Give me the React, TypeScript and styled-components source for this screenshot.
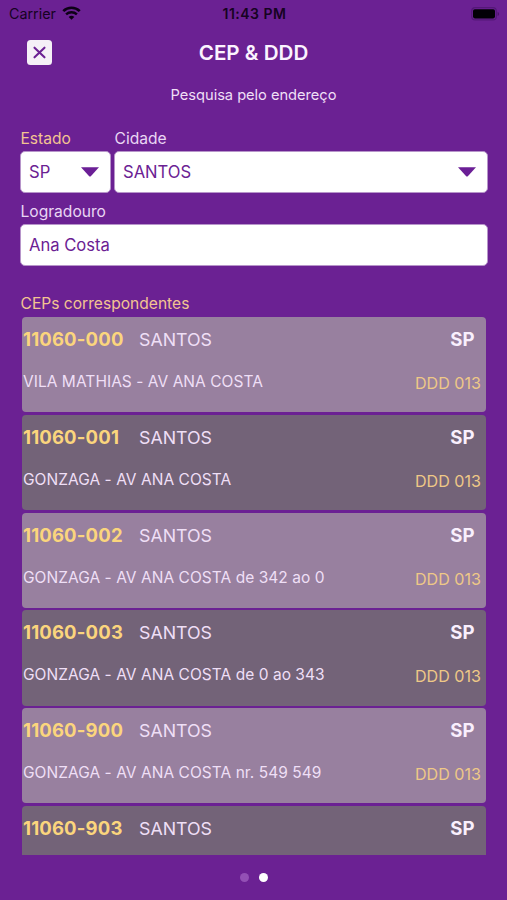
import React from "react";
import styled, { createGlobalStyle } from "styled-components";

const PURPLE = "#6b2193";

const GlobalStyle = createGlobalStyle`
  * { box-sizing: border-box; }
  body {
    margin: 0;
    background: ${PURPLE};
    font-family: "Inter", sans-serif;
  }
`;

const Screen = styled.main`
  display: flex;
  flex-direction: column;
  width: 507px;
  height: 900px;
  overflow: hidden;
  background: ${PURPLE};
  color: #efdff6;
`;

const StatusBar = styled.header`
  display: grid;
  grid-template-columns: 1fr auto 1fr;
  align-items: center;
  height: 28px;
  padding: 0 7px 0 9px;
  color: #160322;
`;

const Carrier = styled.div`
  display: flex;
  align-items: center;
  gap: 6px;
  font-size: 14.3px;
  line-height: 28px;

  svg { margin-top: -3px; }
`;

const Clock = styled.time`
  font-size: 14px;
  font-weight: 600;
  letter-spacing: 0.5px;
  line-height: 28px;
`;

const BatterySlot = styled.div`
  display: flex;
  justify-content: flex-end;
  margin-top: -1px;
`;

const TitleBar = styled.div`
  display: grid;
  grid-template-columns: 100px 1fr 100px;
  align-items: center;
  height: 48px;
`;

const CloseButton = styled.button`
  display: grid;
  place-items: center;
  width: 25px;
  height: 25px;
  margin: 0 0 2px 27px;
  padding: 0;
  border: 0;
  border-radius: 3.5px;
  background: #f5f0f7;
`;

const Title = styled.h1`
  margin: 0;
  text-align: center;
  color: #fbf3ff;
  font-size: 20.6px;
  font-weight: 580;
  line-height: 50px;
`;

const Subtitle = styled.p`
  height: 36px;
  margin: 0;
  text-align: center;
  font-size: 14.7px;
  letter-spacing: -0.05px;
  line-height: 38px;
`;

const Form = styled.form`
  display: grid;
  grid-template-columns: 91px 1fr;
  column-gap: 3px;
  row-gap: 7px;
  padding: 15px 19px 0 20px;
`;

const Field = styled.label<{ $wide?: boolean }>`
  display: flex;
  flex-direction: column;
  grid-column: ${(p) => (p.$wide ? "1 / -1" : "auto")};
`;

const Caption = styled.span<{ $accent?: boolean }>`
  height: 24px;
  padding-left: 0.5px;
  color: ${(p) => (p.$accent ? "#f3c491" : "#e9d6f3")};
  font-size: 15.6px;
  line-height: 23px;
`;

const Control = styled.span`
  display: flex;
  align-items: center;
  justify-content: space-between;
  height: 42px;
  padding: 0 11px 0 8px;
  border: 1px solid #b795ca;
  border-radius: 5px;
  background: #fff;
  color: #6b2193;
  font-size: 16.6px;
  line-height: 40px;
`;

const ResultsHeading = styled.h2`
  height: 29.5px;
  margin: 21.5px 0 0;
  padding-left: 20.5px;
  color: #f3c491;
  font-size: 15.6px;
  font-weight: 400;
  line-height: 32px;
`;

const Results = styled.ul`
  display: flex;
  flex-direction: column;
  gap: 2.5px;
  height: 538px;
  margin: 0 21px 0 21.5px;
  padding: 0;
  overflow: hidden;
  list-style: none;
`;

const Card = styled.li<{ $dark: boolean }>`
  flex: 0 0 95.25px;
  height: 95.25px;
  padding: 0 5px 0 1.5px;
  border-radius: 4px;
  background: ${(p) => (p.$dark ? "#736378" : "#98809f")};
`;

const CardTop = styled.div`
  display: grid;
  grid-template-columns: 116px 1fr auto;
  height: 44px;
  padding-right: 6.5px;
  line-height: 44px;
`;

const Code = styled.strong`
  color: #fbd57d;
  font-size: 18.5px;
  font-weight: 650;
  letter-spacing: 0.17px;
`;

const City = styled.span`
  font-size: 17.8px;
  line-height: 46px;
`;

const Region = styled.strong`
  color: #f9effd;
  font-size: 18.6px;
  font-weight: 650;
`;

const CardBottom = styled.div`
  display: flex;
  justify-content: space-between;
`;

const Address = styled.span`
  font-size: 15.5px;
  letter-spacing: 0.04px;
  line-height: 42px;
`;

const AreaCode = styled.span`
  color: #eec887;
  font-size: 16.1px;
  line-height: 44px;
`;

const Pager = styled.nav`
  display: flex;
  justify-content: center;
  gap: 10.5px;
  padding: 17.5px 0 0 1px;
`;

const Dot = styled.span<{ $active?: boolean }>`
  width: 9px;
  height: 9px;
  border-radius: 50%;
  background: ${(p) => (p.$active ? "#fff" : "#9350b5")};
`;

const WifiIcon = () => (
  <svg width="19" height="14" viewBox="0 0 19 14" fill="none" stroke="#0d0116">
    <path d="M1.3 5.1C5.8.6 13.2.6 17.7 5.1" strokeWidth="2.7" />
    <path d="M4.1 8.3c3-2.8 7.8-2.8 10.8 0" strokeWidth="2.4" />
    <path d="M6.7 10.9c1.6-1.5 4-1.5 5.6 0L9.5 13.8z" fill="#0d0116" stroke="none" />
  </svg>
);

const BatteryIcon = () => (
  <svg width="29" height="14" viewBox="0 0 29 14">
    <rect x="0.7" y="0.7" width="24.6" height="12.2" rx="3.5" fill="none" stroke="#541878" strokeWidth="1.2" />
    <rect x="2" y="2.2" width="22" height="9.2" rx="1.8" fill="#030006" />
    <path d="M26.6 4.7c2 .8 2 3.6 0 4.4z" fill="#4c146b" />
  </svg>
);

const CloseIcon = () => (
  <svg width="13" height="13" viewBox="0 0 13 13" stroke="#6b2193" strokeWidth="2.1" strokeLinecap="round">
    <path d="M1.5 1.7l10 9.6M11.5 1.7l-10 9.6" />
  </svg>
);

const Arrow = () => (
  <svg width="18" height="10" viewBox="0 0 18 10" fill="#6b1f96">
    <path d="M0 .3h18L9.8 9.2q-.8.7-1.6 0z" />
  </svg>
);

const results = [
  { code: "11060-000", address: "VILA MATHIAS - AV ANA COSTA" },
  { code: "11060-001", address: "GONZAGA - AV ANA COSTA" },
  { code: "11060-002", address: "GONZAGA - AV ANA COSTA de 342 ao 0" },
  { code: "11060-003", address: "GONZAGA - AV ANA COSTA de 0 ao 343" },
  { code: "11060-900", address: "GONZAGA - AV ANA COSTA nr. 549 549" },
  { code: "11060-903", address: "" },
];

export default function App() {
  return (
    <>
      <GlobalStyle />
      <Screen>
        <StatusBar>
          <Carrier>
            Carrier <WifiIcon />
          </Carrier>
          <Clock>11:43 PM</Clock>
          <BatterySlot>
            <BatteryIcon />
          </BatterySlot>
        </StatusBar>
        <TitleBar>
          <CloseButton type="button" aria-label="Fechar">
            <CloseIcon />
          </CloseButton>
          <Title>CEP &amp; DDD</Title>
        </TitleBar>
        <Subtitle>Pesquisa pelo endereço</Subtitle>
        <Form>
          <Field>
            <Caption $accent>Estado</Caption>
            <Control>
              SP <Arrow />
            </Control>
          </Field>
          <Field>
            <Caption>Cidade</Caption>
            <Control>
              SANTOS <Arrow />
            </Control>
          </Field>
          <Field $wide>
            <Caption>Logradouro</Caption>
            <Control>Ana Costa</Control>
          </Field>
        </Form>
        <ResultsHeading>CEPs correspondentes</ResultsHeading>
        <Results>
          {results.map((r, i) => (
            <Card key={r.code} $dark={i % 2 === 1}>
              <CardTop>
                <Code>{r.code}</Code>
                <City>SANTOS</City>
                <Region>SP</Region>
              </CardTop>
              {r.address && (
                <CardBottom>
                  <Address>{r.address}</Address>
                  <AreaCode>DDD 013</AreaCode>
                </CardBottom>
              )}
            </Card>
          ))}
        </Results>
        <Pager>
          <Dot />
          <Dot $active />
        </Pager>
      </Screen>
    </>
  );
}
